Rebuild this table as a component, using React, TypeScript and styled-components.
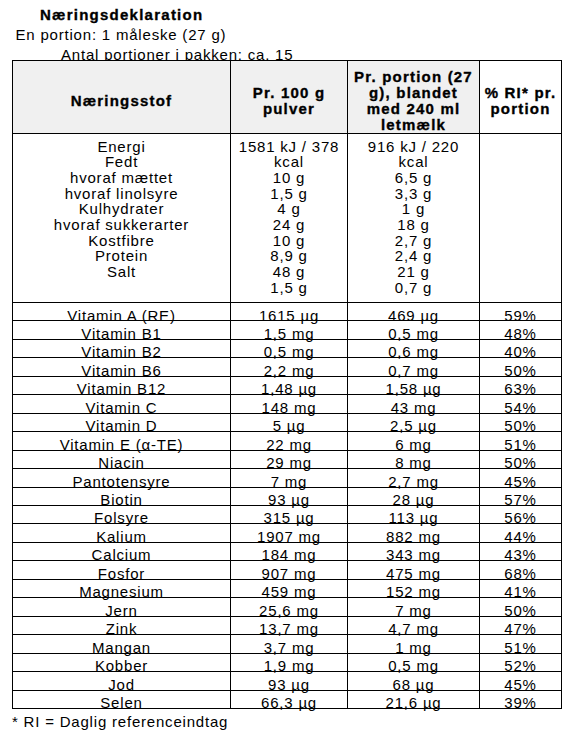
import React from "react";
import styled, { createGlobalStyle } from "styled-components";

const GlobalStyle = createGlobalStyle`
  html, body {
    margin: 0;
    padding: 0;
    background: #ffffff;
  }
  body {
    font-family: "Liberation Sans", Arial, sans-serif;
    color: #000;
    font-size: 15px;
    letter-spacing: 0.8px;
  }
`;

const Page = styled.div`
  padding-top: 5px;
  width: 580px;
`;

const TextLine = styled.div<{ $indent: number }>`
  margin-left: ${(p) => p.$indent}px;
  line-height: 20px;
  height: 20px;
  white-space: nowrap;
`;

const Title = styled(TextLine)`
  font-weight: 700;
  letter-spacing: 1.25px;
  -webkit-text-stroke: 0.35px #000;
`;

const Table = styled.div`
  margin: -5px 0 0 12px;
  width: 550px;
  box-sizing: border-box;
  border-left: 1px solid #000;
  border-top: 1px solid #000;
  display: grid;
  grid-template-columns: 218px 117px 132px 82px;
`;

const HeadCell = styled.div<{ $shade: boolean }>`
  box-sizing: border-box;
  height: 73px;
  border-right: 1px solid #000;
  border-bottom: 1px solid #000;
  background: ${(p) => (p.$shade ? "#f0f0f0" : "#ffffff")};
  display: flex;
  flex-direction: column;
  justify-content: center;
  align-items: center;
  padding-top: 7px;
  text-align: center;
  font-weight: 700;
  line-height: 16px;
  letter-spacing: 1.2px;
  -webkit-text-stroke: 0.35px #000;
`;

const BlockCell = styled.div`
  box-sizing: border-box;
  height: 169px;
  border-right: 1px solid #000;
  border-bottom: 1px solid #000;
  padding: 4.5px 4px 0;
  text-align: center;
  line-height: 15.7px;
`;

const RowCell = styled.div`
  box-sizing: border-box;
  height: 18.4545px;
  border-right: 1px solid #000;
  border-bottom: 1px solid #000;
  padding-top: 4.5px;
  text-align: center;
  line-height: 15.7px;
  white-space: nowrap;
  overflow: visible;
`;

const Footer = styled.div`
  margin: 3.5px 0 0 12px;
  line-height: 20px;
`;

const headers: { lines: string[]; shade: boolean }[] = [
  { lines: ["Næringsstof"], shade: true },
  { lines: ["Pr. 100 g", "pulver"], shade: true },
  { lines: ["Pr. portion (27", "g), blandet", "med 240 ml", "letmælk"], shade: true },
  { lines: ["% RI* pr.", "portion"], shade: false },
];

const blockLabels = [
  "Energi",
  "Fedt",
  "hvoraf mættet",
  "hvoraf linolsyre",
  "Kulhydrater",
  "hvoraf sukkerarter",
  "Kostfibre",
  "Protein",
  "Salt",
];
const block100 = ["1581 kJ / 378 kcal", "10 g", "1,5 g", "4 g", "24 g", "10 g", "8,9 g", "48 g", "1,5 g"];
const blockPortion = ["916 kJ / 220 kcal", "6,5 g", "3,3 g", "1 g", "18 g", "2,7 g", "2,4 g", "21 g", "0,7 g"];

const rows: [string, string, string, string][] = [
  ["Vitamin A (RE)", "1615 µg", "469 µg", "59%"],
  ["Vitamin B1", "1,5 mg", "0,5 mg", "48%"],
  ["Vitamin B2", "0,5 mg", "0,6 mg", "40%"],
  ["Vitamin B6", "2,2 mg", "0,7 mg", "50%"],
  ["Vitamin B12", "1,48 µg", "1,58 µg", "63%"],
  ["Vitamin C", "148 mg", "43 mg", "54%"],
  ["Vitamin D", "5 µg", "2,5 µg", "50%"],
  ["Vitamin E (α-TE)", "22 mg", "6 mg", "51%"],
  ["Niacin", "29 mg", "8 mg", "50%"],
  ["Pantotensyre", "7 mg", "2,7 mg", "45%"],
  ["Biotin", "93 µg", "28 µg", "57%"],
  ["Folsyre", "315 µg", "113 µg", "56%"],
  ["Kalium", "1907 mg", "882 mg", "44%"],
  ["Calcium", "184 mg", "343 mg", "43%"],
  ["Fosfor", "907 mg", "475 mg", "68%"],
  ["Magnesium", "459 mg", "152 mg", "41%"],
  ["Jern", "25,6 mg", "7 mg", "50%"],
  ["Zink", "13,7 mg", "4,7 mg", "47%"],
  ["Mangan", "3,7 mg", "1 mg", "51%"],
  ["Kobber", "1,9 mg", "0,5 mg", "52%"],
  ["Jod", "93 µg", "68 µg", "45%"],
  ["Selen", "66,3 µg", "21,6 µg", "39%"],
];

export default function App() {
  return (
    <>
      <GlobalStyle />
      <Page>
        <Title $indent={40}>Næringsdeklaration</Title>
        <TextLine $indent={15.5}>En portion: 1 måleske (27 g)</TextLine>
        <TextLine $indent={61}>Antal portioner i pakken: ca. 15</TextLine>
        <Table>
          {headers.map((h, i) => (
            <HeadCell key={i} $shade={h.shade}>
              {h.lines.map((l, j) => (
                <div key={j}>{l}</div>
              ))}
            </HeadCell>
          ))}
          <BlockCell>
            {blockLabels.map((l, i) => (
              <div key={i}>{l}</div>
            ))}
          </BlockCell>
          <BlockCell>
            {block100.map((l, i) => (
              <div key={i}>{l}</div>
            ))}
          </BlockCell>
          <BlockCell>
            {blockPortion.map((l, i) => (
              <div key={i}>{l}</div>
            ))}
          </BlockCell>
          <BlockCell />
          {rows.map((r, i) =>
            r.map((c, j) => <RowCell key={`${i}-${j}`}>{c}</RowCell>)
          )}
        </Table>
        <Footer>* RI = Daglig referenceindtag</Footer>
      </Page>
    </>
  );
}
